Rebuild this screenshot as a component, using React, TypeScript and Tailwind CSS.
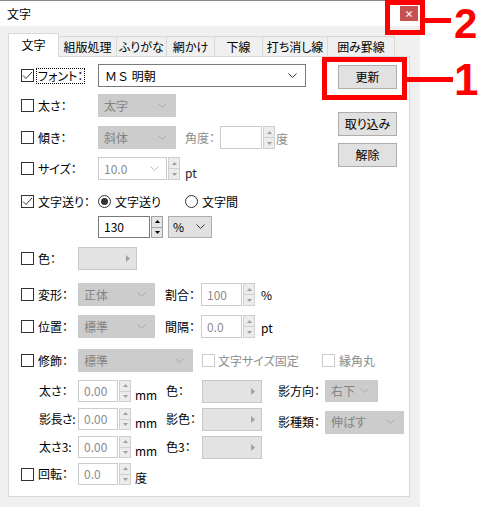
import React from 'react';

// Win-style "文字" dialog with red callouts

const Chevron = ({ c = '#a8a8a8' }: { c?: string }) => (
  <svg width="9" height="6" viewBox="0 0 9 6">
    <polyline points="0.5,0.5 4.5,4.5 8.5,0.5" fill="none" stroke={c} strokeWidth="1" />
  </svg>
);

const Tri = ({ up, c }: { up?: boolean; c: string }) => (
  <svg width="5" height="3" viewBox="0 0 5 3">
    <polygon points={up ? '0,3 2.5,0 5,3' : '0,0 5,0 2.5,3'} fill={c} />
  </svg>
);

function Check({ on, off }: { on?: boolean; off?: boolean }) {
  return (
    <div
      className={`w-[13px] h-[13px] shrink-0 border bg-white flex items-center justify-center ${
        off ? 'border-[#cccccc]' : 'border-[#333333]'
      }`}
    >
      {on && (
        <svg width="11" height="9" viewBox="0 0 11 9">
          <polyline points="1,4.5 4,7.5 10,1" fill="none" stroke="#333" strokeWidth="1" />
        </svg>
      )}
    </div>
  );
}

function Radio({ on }: { on?: boolean }) {
  return (
    <div className="w-[13px] h-[13px] shrink-0 rounded-full border border-[#333333] bg-white flex items-center justify-center">
      {on && <div className="w-[7px] h-[7px] rounded-full bg-[#333333]" />}
    </div>
  );
}

function Spin({ on, h = 'h-[23px]' }: { on?: boolean; h?: string }) {
  const c = on ? '#000000' : '#a0a0a0';
  const b = on ? 'border-[#a0a0a0] bg-[#e5e5e5]' : 'border-[#cfcfcf] bg-[#ececec]';
  return (
    <div className={`flex flex-col w-[12px] shrink-0 ${h}`}>
      <div className={`flex-1 flex items-center justify-center border ${b}`}>
        <Tri up c={c} />
      </div>
      <div className={`flex-1 flex items-center justify-center border border-t-0 ${b}`}>
        <Tri c={c} />
      </div>
    </div>
  );
}

function DSelect({ w, value, h = 'h-[23px]' }: { w: string; value: string; h?: string }) {
  return (
    <div className={`${w} ${h} shrink-0 bg-[#cccccc] border border-[#cccccc] flex items-center justify-between pl-[5px] pr-[8px] text-[#838383]`}>
      <span>{value}</span>
      <Chevron />
    </div>
  );
}

function Num({ w, value, on, h = 'h-[23px]' }: { w: string; value: string; on?: boolean; h?: string }) {
  return (
    <div className="flex shrink-0">
      <div
        className={`${w} ${h} bg-white border flex items-center pl-[5px] ${
          on ? 'border-[#7a7a7a] text-black' : 'border-[#cccccc] text-[#8c8c8c]'
        }`}
      >
        {value}
      </div>
      <div className="ml-px">
        <Spin on={on} h={h} />
      </div>
    </div>
  );
}

function ColorBtn({ w = 'w-[60px]' }: { w?: string }) {
  return (
    <div className={`${w} h-[23px] shrink-0 bg-[#e3e3e3] border border-[#c8c8c8] flex items-center justify-end pr-[6px]`}>
      <svg width="4" height="7" viewBox="0 0 4 7">
        <polygon points="0,0 4,3.5 0,7" fill="#a0a0a0" />
      </svg>
    </div>
  );
}

function Btn({ label }: { label: string }) {
  return (
    <div className="w-[59px] h-[24px] bg-[#e1e1e1] border border-[#adadad] flex items-center justify-center text-black">
      {label}
    </div>
  );
}

const tabs = [
  { label: '組版処理', w: 'w-[58px]' },
  { label: 'ふりがな', w: 'w-[50px]' },
  { label: '網かけ', w: 'w-[48px]' },
  { label: '下線', w: 'w-[48px]' },
  { label: '打ち消し線', w: 'w-[65px]' },
  { label: '囲み罫線', w: 'w-[67px]' },
];

export default function App() {
  return (
    <div className="relative w-[500px] h-[507px] overflow-hidden bg-white text-[12px] leading-[14px] text-black font-['Noto_Sans_CJK_JP','Noto_Sans',sans-serif] [font-feature-settings:'palt']">
      <div className="w-[420px] h-full bg-[#f0f0f0] flex flex-col">
        {/* title bar */}
        <div className="h-[26px] shrink-0 bg-white border-t border-[#8a8a8a] flex items-center justify-between pl-[7px] pr-[2px]">
          <span className="text-[12px]">文字</span>
          <div className="w-[18px] h-[15px] bg-[#c75050] flex items-center justify-center text-white text-[9px] font-bold leading-none">
            ×
          </div>
        </div>

        <div className="pl-[8px] pt-[7px] flex flex-col">
          {/* tabs */}
          <div className="flex items-end h-[24px] relative z-10">
            <div className="w-[51px] h-[24px] bg-white border border-b-0 border-[#d9d9d9] flex items-start justify-center pt-[4px]">
              文字
            </div>
            {tabs.map((t) => (
              <div
                key={t.label}
                className={`${t.w} h-[20px] mb-px bg-[#f0f0f0] border border-l-0 border-b-0 border-[#d9d9d9] flex items-center justify-center`}
              >
                {t.label}
              </div>
            ))}
          </div>

          {/* panel */}
          <div className="w-[402px] h-[441px] -mt-px bg-white border border-[#d9d9d9] flex flex-col pl-[12px]">
            <div className="flex">
              <div className="flex-1 flex flex-col">
                {/* フォント */}
                <div className="flex items-center h-[23px] mt-[7px]">
                  <div className="w-[77px] flex items-center">
                    <Check on />
                    <span className="ml-[2px] px-px h-[16px] flex items-center border border-dotted border-black">フォント：</span>
                  </div>
                  <div className="w-[208px] h-[23px] bg-white border border-[#7a7a7a] flex items-center justify-between pl-[6px] pr-[8px]">
                    <span className="[font-feature-settings:normal]">ＭＳ 明朝</span>
                    <Chevron c="#333333" />
                  </div>
                </div>
                {/* 太さ */}
                <div className="flex items-center h-[23px] mt-[7px]">
                  <div className="w-[77px] flex items-center">
                    <Check />
                    <span className="ml-[4px]">太さ：</span>
                  </div>
                  <DSelect w="w-[78px]" value="太字" />
                </div>
                {/* 傾き */}
                <div className="flex items-center h-[23px] mt-[9px]">
                  <div className="w-[77px] flex items-center">
                    <Check />
                    <span className="ml-[4px]">傾き：</span>
                  </div>
                  <DSelect w="w-[78px]" value="斜体" />
                  <span className="ml-[9px] w-[35px] text-[#8c8c8c]">角度：</span>
                  <Num w="w-[42px]" value="" />
                  <span className="ml-px mt-[3px] text-[#8c8c8c]">度</span>
                </div>
                {/* サイズ */}
                <div className="flex items-center h-[23px] mt-[8px]">
                  <div className="w-[77px] flex items-center">
                    <Check />
                    <span className="ml-[4px]">サイズ：</span>
                  </div>
                  <div className="w-[69px] h-[23px] bg-white border border-[#cccccc] flex items-center justify-between pl-[5px] pr-[7px] text-[#8c8c8c]">
                    <span>10.0</span>
                    <Chevron c="#c0c0c0" />
                  </div>
                  <div className="ml-px">
                    <Spin />
                  </div>
                  <span className="ml-[5px] self-end text-[#1a1a2e]">pt</span>
                </div>
                {/* 文字送り */}
                <div className="flex items-center h-[23px] mt-[10px]">
                  <div className="w-[77px] flex items-center">
                    <Check on />
                    <span className="ml-[4px]">文字送り：</span>
                  </div>
                  <Radio on />
                  <span className="ml-[4px] w-[70px]">文字送り</span>
                  <Radio />
                  <span className="ml-[4px]">文字間</span>
                </div>
                <div className="flex items-center h-[22px] mt-[3px] pl-[77px]">
                  <Num w="w-[52px]" value="130" on h="h-[22px]" />
                  <div className="ml-[5px] w-[44px] h-[22px] bg-[#e1e1e1] border border-[#adadad] flex items-center justify-between pl-[4px] pr-[6px]">
                    <span>%</span>
                    <Chevron c="#333333" />
                  </div>
                </div>
              </div>

              {/* right buttons */}
              <div className="w-[59px] mr-[12px] flex flex-col pt-[8px]">
                <Btn label="更新" />
                <div className="mt-[23px]">
                  <Btn label="取り込み" />
                </div>
                <div className="mt-[7px]">
                  <Btn label="解除" />
                </div>
              </div>
            </div>

            {/* 色 */}
            <div className="flex items-center h-[23px] mt-[9px]">
              <div className="w-[57px] flex items-center">
                <Check />
                <span className="ml-[4px]">色：</span>
              </div>
              <ColorBtn w="w-[59px]" />
            </div>
            {/* 変形 */}
            <div className="flex items-center h-[23px] mt-[13px]">
              <div className="w-[57px] flex items-center">
                <Check />
                <span className="ml-[4px]">変形：</span>
              </div>
              <DSelect w="w-[77px]" value="正体" />
              <span className="ml-[10px] w-[36px]">割合：</span>
              <Num w="w-[41px]" value="100" />
              <span className="ml-[6px]">%</span>
            </div>
            {/* 位置 */}
            <div className="flex items-center h-[23px] mt-[9px]">
              <div className="w-[57px] flex items-center">
                <Check />
                <span className="ml-[4px]">位置：</span>
              </div>
              <DSelect w="w-[77px]" value="標準" />
              <span className="ml-[10px] w-[36px]">間隔：</span>
              <Num w="w-[41px]" value="0.0" />
              <span className="ml-[6px] mt-[3px]">pt</span>
            </div>
            {/* 修飾 */}
            <div className="flex items-center h-[23px] mt-[11px]">
              <div className="w-[57px] flex items-center">
                <Check />
                <span className="ml-[4px]">修飾：</span>
              </div>
              <DSelect w="w-[115px]" value="標準" />
              <div className="ml-[9px] w-[120px] flex items-center text-[#8c8c8c]">
                <Check off />
                <span className="ml-[3px]">文字サイズ固定</span>
              </div>
              <Check off />
              <span className="ml-[4px] text-[#8c8c8c]">縁角丸</span>
            </div>
            {/* 太さ (decoration) */}
            <div className="flex items-center h-[22px] mt-[8px]">
              <span className="w-[57px] pl-[18px]">太さ：</span>
              <Num w="w-[40px]" value="0.00" h="h-[22px]" />
              <span className="w-[35px] pl-[4px] self-end">mm</span>
              <span className="w-[36px]">色：</span>
              <ColorBtn />
              <span className="ml-[16px] w-[47px]">影方向：</span>
              <DSelect w="w-[53px]" value="右下" h="h-[22px]" />
            </div>
            {/* 影長さ */}
            <div className="flex items-center h-[22px] mt-[6px]">
              <span className="w-[57px] pl-[18px] tracking-[-0.5px]">影長さ:</span>
              <Num w="w-[40px]" value="0.00" h="h-[22px]" />
              <span className="w-[35px] pl-[4px] self-end">mm</span>
              <span className="w-[36px]">影色：</span>
              <ColorBtn />
              <span className="ml-[16px] w-[47px] mt-[6px]">影種類：</span>
              <div className="mt-[6px]">
                <DSelect w="w-[79px]" value="伸ばす" />
              </div>
            </div>
            {/* 太さ3 */}
            <div className="flex items-center h-[22px] mt-[6px]">
              <span className="w-[57px] pl-[18px]">太さ3:</span>
              <Num w="w-[40px]" value="0.00" h="h-[22px]" />
              <span className="w-[35px] pl-[4px] self-end">mm</span>
              <span className="w-[36px]">色3：</span>
              <ColorBtn />
            </div>
            {/* 回転 */}
            <div className="flex items-center h-[22px] mt-[5px]">
              <div className="w-[57px] flex items-center">
                <Check />
                <span className="ml-[4px]">回転：</span>
              </div>
              <Num w="w-[40px]" value="0.0" h="h-[22px]" />
              <span className="pl-[4px] self-end">度</span>
            </div>
          </div>
        </div>
      </div>

      {/* callouts */}
      <div className="absolute left-[322px] top-[57px] w-[85px] h-[43px] border-[5px] border-[#ff0000]" />
      <div className="absolute left-[407px] top-[77px] w-[46px] h-[5px] bg-[#ff0000]" />
      <div className="absolute left-[454px] top-[56px] text-[#ff0000] text-[44px] leading-[48px] font-bold font-['Liberation_Sans',sans-serif]">
        1
      </div>
      <div className="absolute left-[385px] top-0 w-[40px] h-[35px] border-[5px] border-[#ff0000]" />
      <div className="absolute left-[425px] top-[18px] w-[26px] h-[5px] bg-[#ff0000]" />
      <div className="absolute left-[454px] top-0 text-[#ff0000] text-[42px] leading-[47px] font-bold font-['Liberation_Sans',sans-serif]">
        2
      </div>
    </div>
  );
}
